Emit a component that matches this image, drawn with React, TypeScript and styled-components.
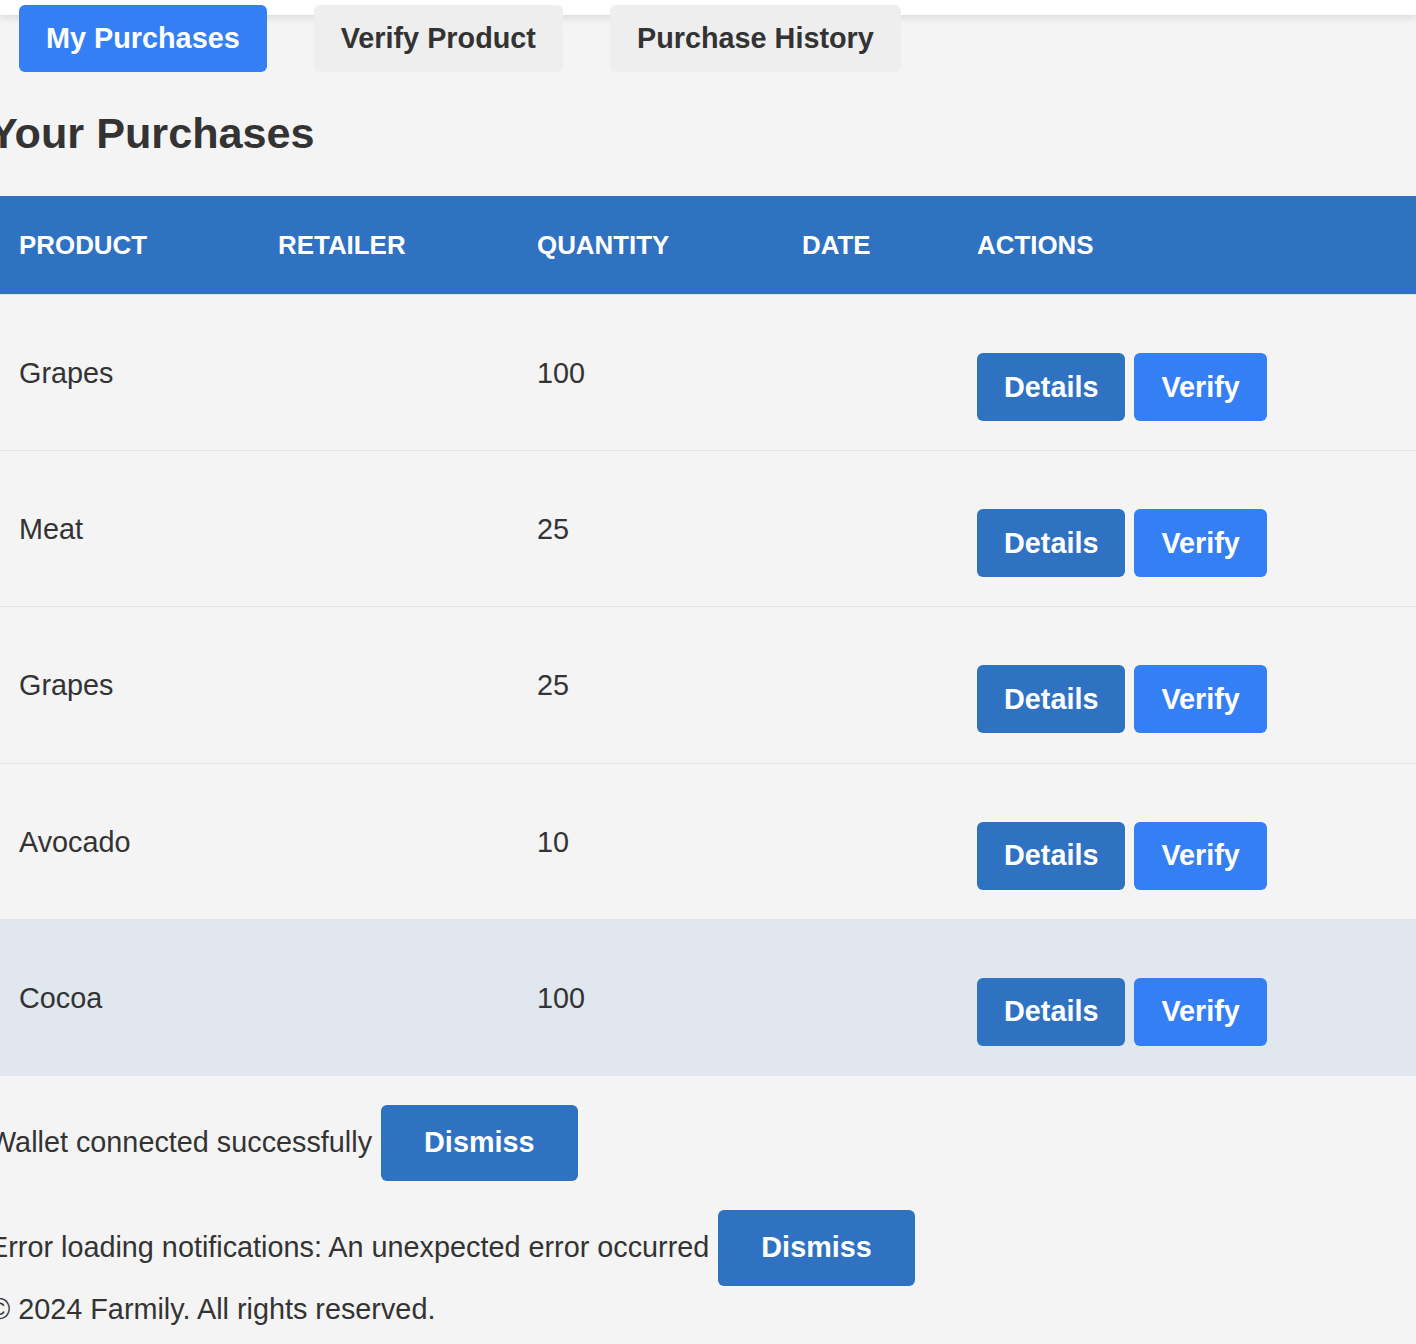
import React from "react";
import styled, { createGlobalStyle } from "styled-components";

const GlobalStyle = createGlobalStyle`
  html, body {
    margin: 0;
    padding: 0;
    background: #f4f4f4;
    overflow: hidden;
  }
  body {
    font-family: "Liberation Sans", Arial, Helvetica, sans-serif;
    color: #333333;
    font-size: 28.8px;
  }
  * { box-sizing: border-box; }
`;

const Page = styled.div`
  width: 1416px;
  min-height: 1344px;
  background: #f4f4f4;
`;

const TopBar = styled.header`
  height: 15px;
  background: #ffffff;
  box-shadow: 0 2px 8px rgba(0, 0, 0, 0.12);
`;

const TabNav = styled.nav`
  position: relative;
  z-index: 1;
  display: flex;
  gap: 47px;
  padding-left: 19px;
  margin-top: -10px;
`;

const Tab = styled.button<{ $active?: boolean }>`
  font-family: inherit;
  font-size: 28.8px;
  font-weight: 700;
  line-height: 33px;
  padding: 17px 27px;
  border: none;
  border-radius: 6px;
  cursor: pointer;
  background: ${(p) => (p.$active ? "#357ff5" : "#eeeeee")};
  color: ${(p) => (p.$active ? "#ffffff" : "#333333")};
`;

const Main = styled.main`
  margin-left: -11px;
  width: calc(100% + 11px);
`;

const Heading = styled.h2`
  font-size: 43.2px;
  font-weight: 700;
  line-height: 50px;
  margin: 36px 0 38px;
  color: #333333;
`;

const Table = styled.div`
  display: flex;
  flex-direction: column;
`;

const cols = "259px 259px 265px 175px 1fr";

const HeaderRow = styled.div`
  display: grid;
  grid-template-columns: ${cols};
  background: #2f72c1;
  border-bottom: 1px solid #e0e0e0;
`;

const HeadCell = styled.div`
  padding: 34px 30px 34px 30px;
  font-size: 25.92px;
  font-weight: 700;
  line-height: 30px;
  color: #ffffff;
  text-transform: uppercase;
`;

const Row = styled.div<{ $highlight?: boolean }>`
  display: grid;
  grid-template-columns: ${cols};
  height: 156.2px;
  border-bottom: 1px solid ${(p) => (p.$highlight ? "#e0e7ef" : "#e3e3e3")};
  background: ${(p) => (p.$highlight ? "#e0e7ef" : "transparent")};
`;

const Cell = styled.div`
  display: flex;
  align-items: center;
  padding: 2px 30px 0;
  font-size: 28.8px;
  line-height: 33px;
  color: #333333;
`;

const ActionCell = styled.div`
  display: flex;
  align-items: flex-start;
  gap: 9px;
  padding: 58px 30px 0 30px;
`;

const ActionButton = styled.button<{ $variant: "details" | "verify" }>`
  font-family: inherit;
  font-size: 28.8px;
  font-weight: 700;
  line-height: 33px;
  padding: 17.5px 27px;
  border: none;
  border-radius: 6px;
  color: #ffffff;
  cursor: pointer;
  background: ${(p) => (p.$variant === "details" ? "#2f72c1" : "#357ff5")};
`;

const Notice = styled.div`
  display: flex;
  align-items: center;
  gap: 9px;
  margin-top: 29px;
  font-size: 28.8px;
  line-height: 33px;
`;

const DismissButton = styled.button`
  font-family: inherit;
  font-size: 28.8px;
  font-weight: 700;
  line-height: 33px;
  padding: 21.5px 43px;
  border: none;
  border-radius: 6px;
  color: #ffffff;
  background: #2f72c1;
  cursor: pointer;
`;

const Footer = styled.footer`
  margin-top: 7px;
  font-size: 28.8px;
  line-height: 33px;
  color: #333333;
`;

const purchases = [
  { product: "Grapes", retailer: "", quantity: "100", date: "" },
  { product: "Meat", retailer: "", quantity: "25", date: "" },
  { product: "Grapes", retailer: "", quantity: "25", date: "" },
  { product: "Avocado", retailer: "", quantity: "10", date: "" },
  { product: "Cocoa", retailer: "", quantity: "100", date: "" },
];

export default function App() {
  return (
    <Page>
      <GlobalStyle />
      <TopBar />
      <TabNav>
        <Tab $active>My Purchases</Tab>
        <Tab>Verify Product</Tab>
        <Tab>Purchase History</Tab>
      </TabNav>
      <Main>
        <Heading>Your Purchases</Heading>
        <Table>
          <HeaderRow>
            <HeadCell>Product</HeadCell>
            <HeadCell>Retailer</HeadCell>
            <HeadCell>Quantity</HeadCell>
            <HeadCell>Date</HeadCell>
            <HeadCell>Actions</HeadCell>
          </HeaderRow>
          {purchases.map((p, i) => (
            <Row key={i} $highlight={i === purchases.length - 1}>
              <Cell>{p.product}</Cell>
              <Cell>{p.retailer}</Cell>
              <Cell>{p.quantity}</Cell>
              <Cell>{p.date}</Cell>
              <ActionCell>
                <ActionButton $variant="details">Details</ActionButton>
                <ActionButton $variant="verify">Verify</ActionButton>
              </ActionCell>
            </Row>
          ))}
        </Table>
        <Notice>
          <span>Wallet connected successfully</span>
          <DismissButton>Dismiss</DismissButton>
        </Notice>
        <Notice>
          <span>Error loading notifications: An unexpected error occurred</span>
          <DismissButton>Dismiss</DismissButton>
        </Notice>
        <Footer>© 2024 Farmily. All rights reserved.</Footer>
      </Main>
    </Page>
  );
}
